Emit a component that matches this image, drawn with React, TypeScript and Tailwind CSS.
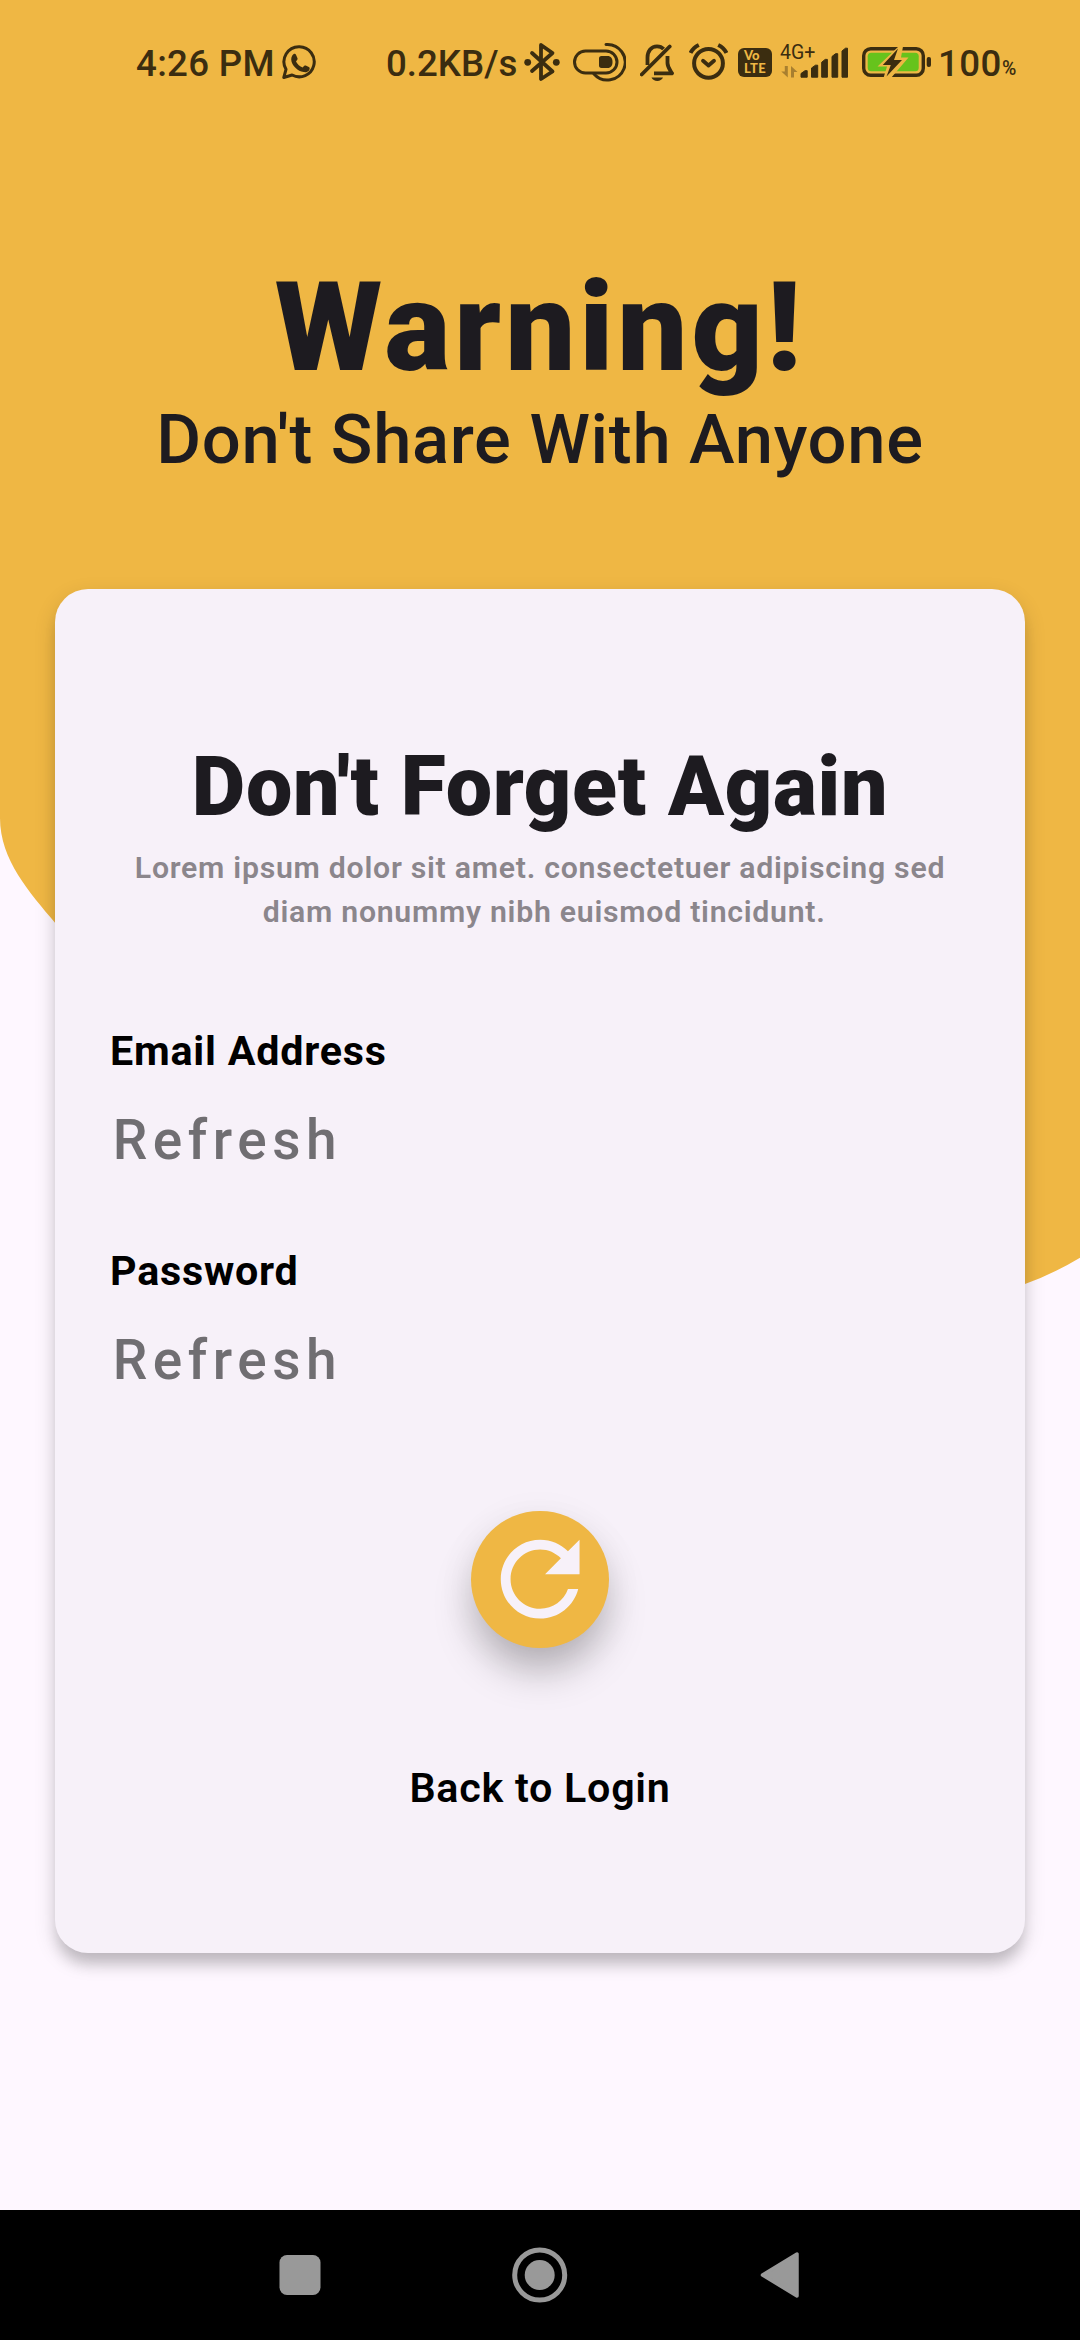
import React from "react";

const INK = "#3b2d10";

function WhatsAppIcon() {
  return (
    <svg className="h-10 w-[34px] shrink-0" viewBox="282 42 34 40" fill="none">
      <path d="M299.500 46.800a15 15 0 1 1-7.400 28.200l-8.300 2.500 2.200-8.200a15 15 0 0 1 13.500-22.500z" stroke={INK} strokeWidth="3" strokeLinejoin="round" />
      <path d="M293.400 54.200c1.300-.7 2.200-.3 2.800 1l1.300 3c.3.9 0 1.500-1.500 3.200 1.600 2.900 3.700 4.900 6.700 6.100 1.600-2.100 2.100-2.300 3.100-1.900l3 1.500c1 .5 1.100 1 .7 2.300-.8 2.200-3.400 3.200-5.800 2.700-6.300-1.200-10.900-6.200-12.200-10.700-.8-2.900.2-6.100 1.900-7.200z" fill={INK} />
    </svg>
  );
}

function BluetoothIcon() {
  return (
    <svg className="h-10 w-9 shrink-0" viewBox="524 42 36 40" fill="none">
      <path d="M532 53l20.500 18.500L541 79V45l11.500 8L532 71" stroke={INK} strokeWidth="3.800" strokeLinejoin="round" strokeLinecap="round" />
      <circle cx="527.700" cy="62.300" r="3.400" fill={INK} />
      <circle cx="556.300" cy="62.300" r="3.400" fill={INK} />
    </svg>
  );
}

function ToggleIcon() {
  return (
    <svg className="ml-[13px] h-10 w-[53px] shrink-0" viewBox="573 42 53 40" fill="none" stroke={INK}>
      <rect x="574.500" y="51" width="42.500" height="22" rx="11" strokeWidth="3" />
      <path d="M606 44.500a17.800 17.800 0 1 1-12 29.500" strokeWidth="3" strokeLinecap="round" />
      <path d="M601.500 56h6c3.500 0 5 2.500 5 6s-1.500 6-5 6h-6c-1.800 0-2.500-.9-2.500-2.500v-7c0-1.600.7-2.500 2.500-2.500z" fill={INK} stroke="none" />
    </svg>
  );
}

function BellOffIcon() {
  return (
    <svg className="ml-[14px] h-10 w-[34px] shrink-0" viewBox="640 42 34 40" fill="none">
      <path d="M647.500 65V57.500c0-6.500 3.800-11.200 9.500-11.200 2.700 0 5 .9 6.600 2.700M667.500 56v7c0 4 2.300 6.500 4.500 10.300h-18" stroke={INK} strokeWidth="3.800" strokeLinejoin="round" />
      <path d="M641.700 74.500L669.700 46.500" stroke={INK} strokeWidth="3.800" strokeLinecap="round" />
      <path d="M651.500 77.500h11.500c-1 2.300-3.200 3.500-5.700 3.500s-4.900-1.200-5.800-3.500z" fill={INK} />
    </svg>
  );
}

function AlarmIcon() {
  return (
    <svg className="ml-[15px] h-10 w-[39px] shrink-0" viewBox="689 42 39 40" fill="none" stroke={INK} strokeLinejoin="round">
      <circle cx="708.500" cy="63.300" r="14.400" strokeWidth="4" />
      <path d="M703 60.800l5.500 4.700 5.500-4.700" strokeWidth="3.800" strokeLinecap="round" />
      <path d="M690.500 53c1.700-3.500 4.500-6.200 8.300-8M726.500 53c-1.700-3.500-4.500-6.200-8.300-8" strokeWidth="4" />
    </svg>
  );
}

function VolteBadge() {
  return (
    <div className="ml-[10px] flex h-[29px] w-[34px] shrink-0 flex-col justify-center rounded-[6px] bg-[#3b2d10] pl-[6px] font-['Lato'] text-[13px] leading-[13px] font-black text-[#eeb744]">
      <span className="h-[13px]">Vo</span>
      <span className="h-[13px] tracking-[0.400px]">LTE</span>
    </div>
  );
}

function Signal() {
  return (
    <div className="relative ml-2 h-10 w-[68px] shrink-0">
      <svg className="h-10 w-[68px]" viewBox="780 42 68 40">
        <g fill={INK} stroke={INK} strokeWidth="1" strokeLinejoin="round">
          <path d="M801 73.500l4-2.800h2.200v6.500h-6.200z" />
          <path d="M811.500 68l4-2.800h2.200v12h-6.200z" />
          <path d="M821.700 62.200l3.500-2.800h2.200v17.800h-5.700z" />
          <path d="M832 56.500l3.500-2.800h2.200v23.500h-5.700z" />
          <path d="M842 51l3.500-2.800h2v29h-5.500z" />
        </g>
        <g fill="#a87f2f">
          <path d="M784.800 66h3v11.500l-6.500-6h3.500z" />
          <path d="M794 77.500h-3V66l6.500 6H794z" />
        </g>
      </svg>
      <span className="absolute top-[1px] left-0 text-[19.500px] leading-[19px] font-normal text-[#3b2d10]">4G+</span>
    </div>
  );
}

function BatteryIcon() {
  return (
    <svg className="ml-[14px] h-10 w-[69px] shrink-0" viewBox="862 42 69 40" fill="none">
      <rect x="863.700" y="48.700" width="59.600" height="26.600" rx="7" stroke={INK} strokeWidth="3.400" />
      <rect x="867.700" y="52.700" width="51" height="18.600" rx="3.500" fill="#66c31c" />
      <rect x="926.700" y="57" width="4.300" height="10" rx="2" fill={INK} />
      <path d="M898.500 46.500L877.500 66.500h9.500l-3.500 11.500h7.500l17.500-20.500h-7.500l2-11z" fill="#eeb744" />
      <path d="M898 48.500L882.800 65h8l-4.300 11.500L902 60h-8z" fill={INK} />
    </svg>
  );
}

function StatusBar() {
  return (
    <div className="flex h-[124px] items-center pl-[136px] text-[36.670px] leading-[40px] font-medium whitespace-nowrap text-[#3b2d10]">
      <span className="w-[146px] shrink-0 pt-[3px] tracking-[0.300px]">4:26 PM</span>
      <WhatsAppIcon />
      <span className="ml-[70px] w-[138px] shrink-0 pt-[3px]">0.2KB/s</span>
      <BluetoothIcon />
      <ToggleIcon />
      <BellOffIcon />
      <AlarmIcon />
      <VolteBadge />
      <Signal />
      <BatteryIcon />
      <span className="ml-[7px] w-[64px] shrink-0 pt-[3px] tracking-[0.400px]">100</span>
      <span className="pt-[13px] text-[19.500px] leading-[20px]">%</span>
    </div>
  );
}

function Field({ label }: { label: string }) {
  return (
    <div className="h-[220px]">
      <div className="h-12 text-[41.250px] leading-[48px] font-bold tracking-[0.780px] text-black">{label}</div>
      <div className="mt-8 pl-[2.750px] text-[55px] leading-[66px] font-medium tracking-[5.500px] text-[#706e72]">Refresh</div>
    </div>
  );
}

function Card() {
  return (
    <main className="mx-[55px] mt-[109px] flex h-[1364px] flex-col rounded-[33px] bg-[#f7f1f9] px-[55px] pt-[149px] shadow-[0_14px_14px_-3px_rgba(0,0,0,0.16),0_8px_22px_rgba(0,0,0,0.14)]">
      <h2 className="h-[97px] text-center text-[82.500px] leading-[97px] font-black tracking-[0.6875px] whitespace-nowrap">
        Don't Forget Again
      </h2>
      <p className="mt-[11px] text-center text-[30.250px] leading-[44px] font-semibold tracking-[0.730px] text-[#8b868c]">
        Lorem ipsum dolor sit amet. consectetuer adipiscing sed
        <br />
        &nbsp;diam nonummy nibh euismod tincidunt.
      </p>
      <div className="mt-[93px]">
        <Field label="Email Address" />
        <Field label="Password" />
      </div>
      <button className="mt-[43.500px] flex size-[137.500px] shrink-0 items-center justify-center self-center rounded-full bg-[#efb744] shadow-[0_26px_40px_-4px_rgba(0,0,0,0.26),0_8px_40px_rgba(0,0,0,0.06)]">
        <svg className="size-[118.250px]" viewBox="0 0 24 24" fill="#f7f1f9">
          <path d="M17.650 6.350C16.200 4.900 14.210 4 12 4c-4.420 0-7.990 3.580-7.990 8s3.570 8 7.990 8c3.730 0 6.840-2.550 7.730-6h-2.080c-.82 2.330-3.040 4-5.650 4-3.310 0-6-2.690-6-6s2.690-6 6-6c1.660 0 3.140.69 4.220 1.780L13 11h7V4l-2.350 2.350z" />
        </svg>
      </button>
      <a className="mt-[116px] text-center text-[41.250px] leading-[48px] font-semibold tracking-[0.730px] text-black">Back to Login</a>
    </main>
  );
}

function NavBar() {
  return (
    <nav className="mt-auto h-[130px] bg-black">
      <svg className="h-[130px] w-full" viewBox="0 2210 1080 130" fill="#999999">
        <rect x="279.500" y="2255" width="41" height="40" rx="7.500" />
        <circle cx="539.700" cy="2275" r="25" fill="none" stroke="#999999" strokeWidth="5" />
        <circle cx="539.700" cy="2275" r="15" />
        <path d="M762.500 2275L797 2254V2296z" stroke="#999999" strokeWidth="3.500" strokeLinejoin="round" />
      </svg>
    </nav>
  );
}

export default function App() {
  return (
    <div className="relative isolate flex h-[2340px] w-[1080px] flex-col overflow-hidden bg-[#fef7ff] font-['Roboto',sans-serif] text-[#1d1b20]">
      <svg className="absolute top-0 left-0 -z-10 h-[1400px] w-[1080px]" viewBox="0 0 1080 1400">
        <path d="M0 0H1080V1257.700Q1053 1274 1025 1284C760 1370 230 1120 55 922.700C30 893 0 860 0 818Z" fill="#efb744" />
      </svg>
      <StatusBar />
      <header className="mt-[131px] h-[225px] text-center whitespace-nowrap">
        <h1 className="h-[145px] text-[123.750px] leading-[145px] font-black tracking-[4.125px]">Warning!</h1>
        <p className="text-[68.750px] leading-[80px] font-medium tracking-[0.6875px]">Don't Share With Anyone</p>
      </header>
      <Card />
      <NavBar />
    </div>
  );
}
